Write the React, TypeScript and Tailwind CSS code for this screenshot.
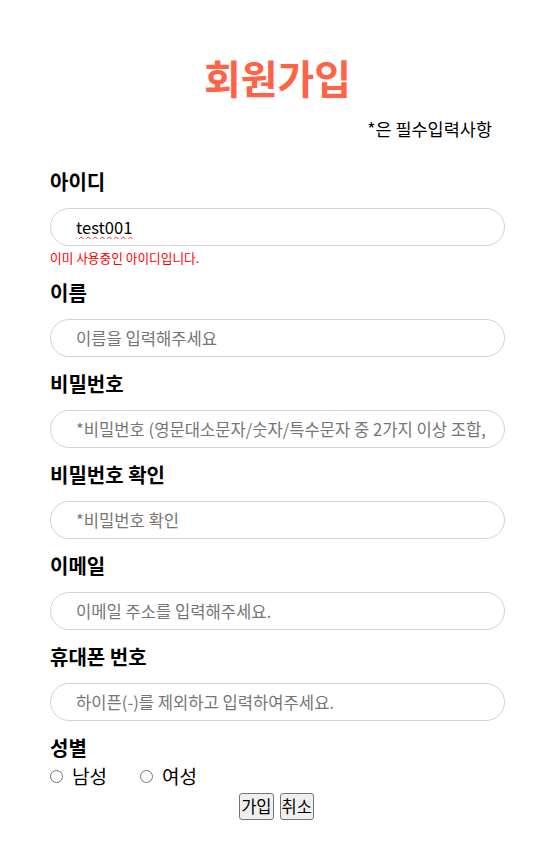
import { useState } from "react";

const fields = [
  { label: "이름", type: "text", placeholder: "이름을 입력해주세요" },
  { label: "비밀번호", type: "password", placeholder: "*비밀번호 (영문대소문자/숫자/특수문자 중 2가지 이상 조합, 8~16자)" },
  { label: "비밀번호 확인", type: "password", placeholder: "*비밀번호 확인" },
  { label: "이메일", type: "email", placeholder: "이메일 주소를 입력해주세요." },
  { label: "휴대폰 번호", type: "tel", placeholder: "하이픈(-)를 제외하고 입력하여주세요." },
];

const inputCls =
  "w-full h-[38px] rounded-full border border-[#d3d3d3] bg-white pl-[25px] pr-4 text-[16.6px] text-black placeholder:text-[#757575] outline-none";

const btnCls =
  "h-[27px] px-[1px] whitespace-nowrap bg-[#efefef] border border-[#767676] rounded-[3px] text-[16.5px] leading-none";

export default function App() {
  const [id, setId] = useState("test001");
  const [gender, setGender] = useState("");

  return (
    <div className="min-h-screen bg-white text-black font-['Noto_Sans_CJK_KR','Noto_Sans',sans-serif]">
      <form className="pl-[50px] pr-[47px] pt-[53px] flex flex-col" onSubmit={(e) => e.preventDefault()}>
        <h1 className="text-center text-[40px] leading-[48px] font-bold text-[#ff6347]">회원가입</h1>
        <p className="mt-4 text-right pr-[13px] text-[17.5px] leading-6">*은 필수입력사항</p>

        <label className="mt-[27px] text-[20px] leading-7 font-bold">아이디</label>
        <input
          className={inputCls + " mt-3 underline decoration-wavy decoration-red-500 decoration-1 underline-offset-2"}
          value={id}
          onChange={(e) => setId(e.target.value)}
        />
        <p className="mt-[4px] text-[12.7px] leading-4 text-[#ff0000]">이미 사용중인 아이디입니다.</p>

        {fields.map((f) => (
          <div key={f.label} className="flex flex-col mt-[13px]">
            <label className="text-[20px] leading-7 font-bold">{f.label}</label>
            <input className={inputCls + " mt-3"} type={f.type === "password" ? "text" : f.type} placeholder={f.placeholder} />
          </div>
        ))}

        <label className="mt-[13px] text-[20px] leading-7 font-bold">성별</label>
        <div className="flex items-center h-7 text-[19px]">
          <label className="flex items-center gap-[9px]">
            <input type="radio" name="g" checked={gender === "m"} onChange={() => setGender("m")} className="w-[13px] h-[13px] m-0" />
            <span>남성</span>
          </label>
          <label className="flex items-center gap-[9px] ml-[33px]">
            <input type="radio" name="g" checked={gender === "f"} onChange={() => setGender("f")} className="w-[13px] h-[13px] m-0" />
            <span>여성</span>
          </label>
        </div>

        <div className="flex justify-center gap-[6px] mt-[3px] pr-[2px]">
          <button type="submit" className={btnCls}>가입</button>
          <button type="button" className={btnCls}>취소</button>
        </div>
      </form>
    </div>
  );
}
